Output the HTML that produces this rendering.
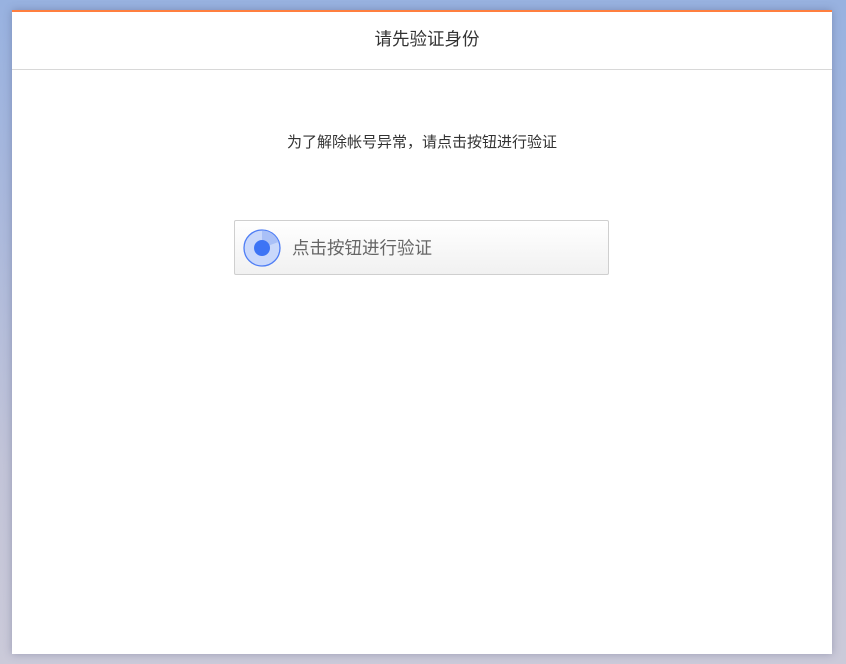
<!DOCTYPE html>
<html><head><meta charset="utf-8"><style>
html,body{margin:0;padding:0;width:846px;height:664px;overflow:hidden}
body{background:linear-gradient(180deg,#98b2e0 0%,#a9b8dc 30%,#c2c4d8 70%,#cbcad9 100%);font-family:"Liberation Sans","Noto Sans CJK SC",sans-serif;position:relative}
.panel{position:absolute;left:12px;top:10px;width:820px;height:644px;background:#fff;border-top:2px solid #ff7f3f;box-sizing:border-box;box-shadow:0 0 8px rgba(60,70,110,.35)}
.hd{height:57px;border-bottom:1px solid #d8d8d8;text-align:center;line-height:55px;font-size:17.5px;color:#333;padding-left:10px}
.msg{position:absolute;top:119px;left:0;width:820px;text-align:center;font-size:15px;color:#333}
.btn{position:absolute;left:222px;top:208px;width:375px;height:55px;box-sizing:border-box;border:1px solid #cfcfcf;border-radius:2px;background:linear-gradient(#fff,#f1f1f1)}
.btn svg{position:absolute;left:8px;top:8px}
.btn span{position:absolute;left:57px;top:14px;font-size:17.5px;color:#666}
</style></head><body>
<div class="panel">
<div class="hd">请先验证身份</div>
<div class="msg">为了解除帐号异常，请点击按钮进行验证</div>
<div class="btn"><svg width="38" height="38" viewBox="0 0 38 38">
<circle cx="19" cy="19" r="18" fill="#c9d8fb" stroke="#4f7ef5" stroke-width="1.3"/>
<path d="M19 19 L19 1.5 A17.5 17.5 0 0 1 35.5 13 Z" fill="#a9c0f7"/>
<circle cx="19" cy="19" r="8" fill="#3d74f5"/>
</svg><span>点击按钮进行验证</span></div>
</div>
</body></html>
